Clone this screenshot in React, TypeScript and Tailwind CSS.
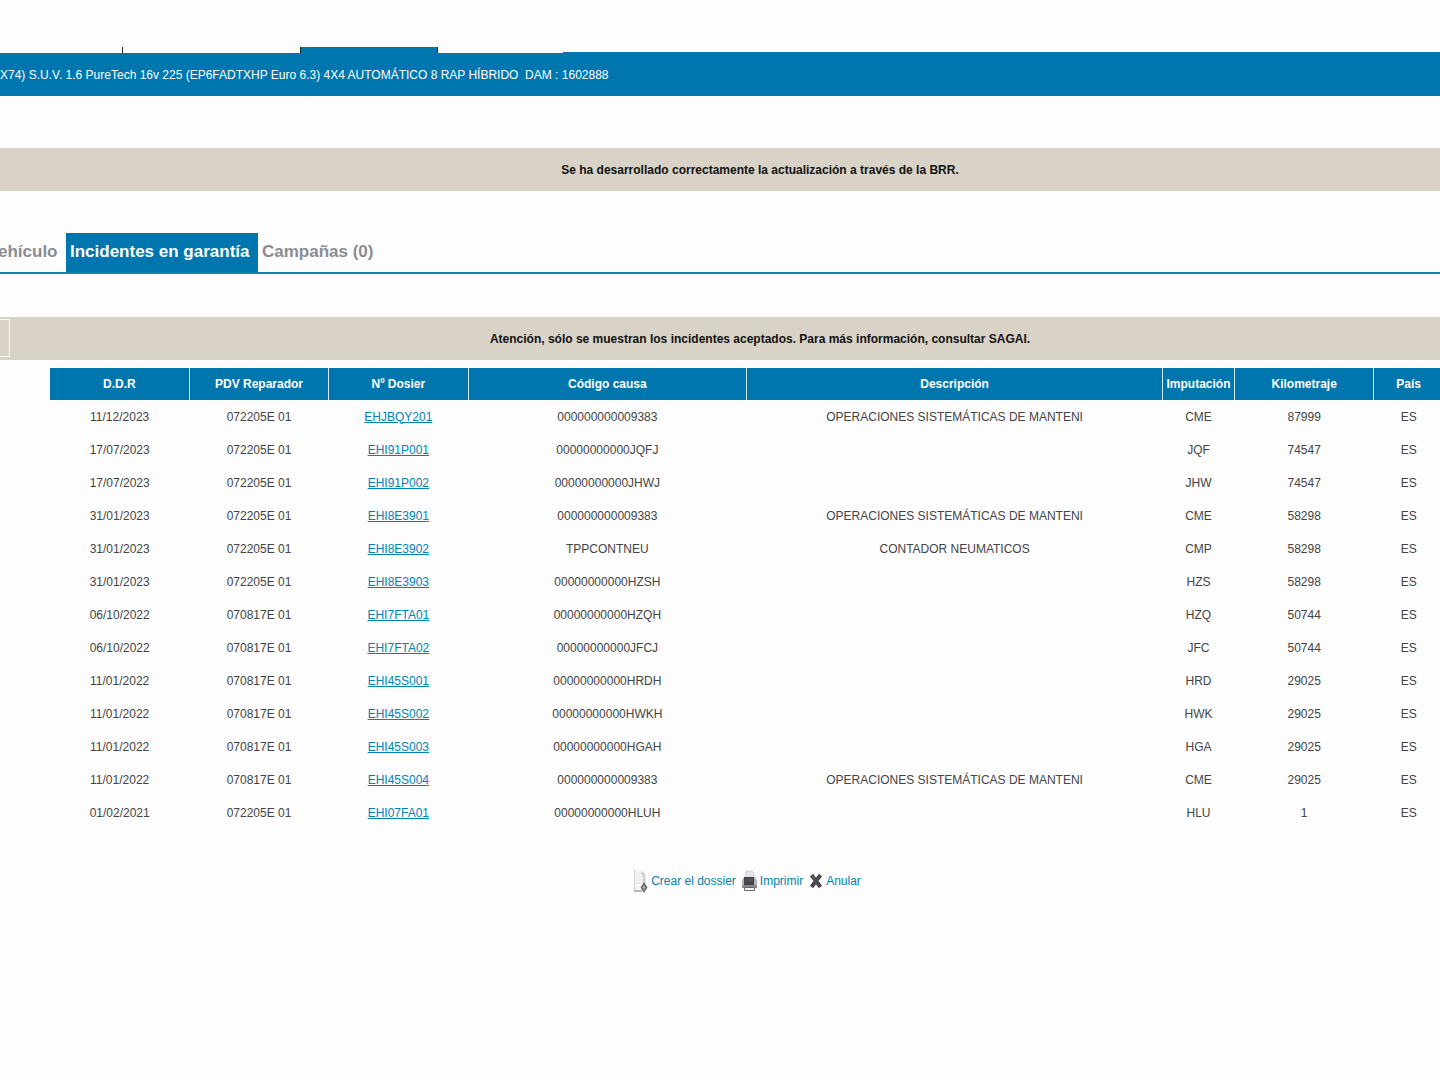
import { clsx } from 'clsx';

interface Incident {
  date: string;
  dealer: string;
  dossier: string;
  cause: string;
  description?: string;
  charge: string;
  km: string;
}

const incidents: Incident[] = [
  { date: '11/12/2023', dealer: '072205E 01', dossier: 'EHJBQY201', cause: '000000000009383', description: 'OPERACIONES SISTEMÁTICAS DE MANTENI', charge: 'CME', km: '87999' },
  { date: '17/07/2023', dealer: '072205E 01', dossier: 'EHI91P001', cause: '00000000000JQFJ', charge: 'JQF', km: '74547' },
  { date: '17/07/2023', dealer: '072205E 01', dossier: 'EHI91P002', cause: '00000000000JHWJ', charge: 'JHW', km: '74547' },
  { date: '31/01/2023', dealer: '072205E 01', dossier: 'EHI8E3901', cause: '000000000009383', description: 'OPERACIONES SISTEMÁTICAS DE MANTENI', charge: 'CME', km: '58298' },
  { date: '31/01/2023', dealer: '072205E 01', dossier: 'EHI8E3902', cause: 'TPPCONTNEU', description: 'CONTADOR NEUMATICOS', charge: 'CMP', km: '58298' },
  { date: '31/01/2023', dealer: '072205E 01', dossier: 'EHI8E3903', cause: '00000000000HZSH', charge: 'HZS', km: '58298' },
  { date: '06/10/2022', dealer: '070817E 01', dossier: 'EHI7FTA01', cause: '00000000000HZQH', charge: 'HZQ', km: '50744' },
  { date: '06/10/2022', dealer: '070817E 01', dossier: 'EHI7FTA02', cause: '00000000000JFCJ', charge: 'JFC', km: '50744' },
  { date: '11/01/2022', dealer: '070817E 01', dossier: 'EHI45S001', cause: '00000000000HRDH', charge: 'HRD', km: '29025' },
  { date: '11/01/2022', dealer: '070817E 01', dossier: 'EHI45S002', cause: '00000000000HWKH', charge: 'HWK', km: '29025' },
  { date: '11/01/2022', dealer: '070817E 01', dossier: 'EHI45S003', cause: '00000000000HGAH', charge: 'HGA', km: '29025' },
  { date: '11/01/2022', dealer: '070817E 01', dossier: 'EHI45S004', cause: '000000000009383', description: 'OPERACIONES SISTEMÁTICAS DE MANTENI', charge: 'CME', km: '29025' },
  { date: '01/02/2021', dealer: '072205E 01', dossier: 'EHI07FA01', cause: '00000000000HLUH', charge: 'HLU', km: '1' },
];

const columns = [
  { label: 'D.D.R', width: 'w-[10%]' },
  { label: 'PDV Reparador', width: 'w-[10%]' },
  { label: 'Nº Dosier', width: 'w-[10%]' },
  { label: 'Código causa', width: 'w-[20%]' },
  { label: 'Descripción', width: '' },
  { label: 'Imputación', width: 'w-[72px]' },
  { label: 'Kilometraje', width: 'w-[10%]' },
  { label: 'País', width: 'w-[5%]' },
];

function DocumentIcon() {
  return (
    <svg width="15" height="24" viewBox="0 0 15 24" aria-hidden="true">
      <path d="M1 1h8l4 5v16H1z" fill="#f6f6f7" />
      <path d="M1.500 1v20" stroke="#cfcfd1" />
      <path d="M3 5h4M3 8h6M3 11h6M3 14h5" stroke="#e2e2e4" />
      <path d="M9 3l2 4v8" fill="none" stroke="#d4d4d6" strokeWidth="3" />
      <path d="M1 22h8" stroke="#77777b" />
      <path d="M11 13l3.500 5.500-3.500 5.500-3.500-5.500z" fill="#6c6c70" />
      <path d="M11 16v5M9.500 18.500h3" stroke="#b4b4b6" />
    </svg>
  );
}

function PrinterIcon() {
  return (
    <svg width="15" height="22" viewBox="0 0 15 22" aria-hidden="true">
      <path d="M4 1h6l2 3v5H3z" fill="#e6e6ea" stroke="#d2d2d6" />
      <path d="M2 7h11l2 3v8H0v-8z" fill="#b4b4ba" />
      <path d="M2 7h10v8H2z" fill="#434347" />
      <path d="M3 9h8M3 11h8" stroke="#5f5f64" />
      <path d="M0 15h15v3H0z" fill="#8a8a90" />
      <path d="M2.500 17.500h10v3h-10z" fill="#f4f4f6" stroke="#66666b" />
    </svg>
  );
}

function CrossIcon() {
  return (
    <svg width="14" height="20" viewBox="0 0 14 20" aria-hidden="true">
      <path d="M2.500 4l9 12M11.500 4l-9 12" stroke="#4a4a4e" strokeWidth="4" />
      <path d="M2.500 4l3 4" stroke="#77777b" />
    </svg>
  );
}

const actions = [
  { label: 'Crear el dossier', Icon: DocumentIcon },
  { label: 'Imprimir', Icon: PrinterIcon },
  { label: 'Anular', Icon: CrossIcon },
];

const tabs = [
  { label: 'ehículo', className: '-ml-1.5 w-[72px] text-[#8c8c90]' },
  { label: 'Incidentes en garantía', className: 'w-48 bg-[#0076ae] text-white' },
  { label: 'Campañas (0)', className: 'text-[#8c8c90]' },
];

function MessageBar({ children }: { children: React.ReactNode }) {
  return (
    <p className="flex h-[43px] items-center justify-center bg-[#d9d3c7] pl-20 font-bold text-[#111]">
      {children}
    </p>
  );
}

export default function App() {
  return (
    <div className="min-h-screen overflow-hidden bg-[#fdfdfe] pt-[47px] font-['Liberation_Sans',Arial,sans-serif] text-xs text-[#444]">
      <header>
        <div className="flex h-1.5 items-end">
          <div className="h-full w-[123px] border-r border-[#222]" />
          <div className="w-[177px]" />
          <div className="h-full w-[138px] border-x border-[#123] bg-[#0076ae]" />
          <div className="w-[125px]" />
          <div className="h-px flex-1 bg-[#0076ae]" />
        </div>
        <h1 className="flex h-[43px] items-center whitespace-pre bg-[#0076ae] text-white">
          {'X74) S.U.V. 1.6 PureTech 16v 225 (EP6FADTXHP Euro 6.3) 4X4 AUTOMÁTICO 8 RAP HÍBRIDO  DAM : 1602888'}
        </h1>
      </header>

      <main>
        <div className="mt-[52px]">
          <MessageBar>Se ha desarrollado correctamente la actualización a través de la BRR.</MessageBar>
        </div>

        <nav className="mt-[42px] flex h-[41px] border-b-2 border-[#0e82b0] text-[17px] font-bold">
          {tabs.map((tab) => (
            <button
              key={tab.label}
              type="button"
              className={clsx('px-1 text-left whitespace-nowrap', tab.className)}
            >
              {tab.label}
            </button>
          ))}
        </nav>

        <div className="relative mt-[43px]">
          <MessageBar>
            Atención, sólo se muestran los incidentes aceptados. Para más información, consultar SAGAI.
          </MessageBar>
          <div className="absolute top-0.5 left-0 h-[38px] w-2.5 border border-l-0 border-[#faf8f4]" />
        </div>

        <div className="mt-2 -mr-1 ml-[50px]">
          <table className="w-full table-fixed border-collapse text-center">
            <thead>
              <tr className="h-8 bg-[#0076ae] text-white">
                {columns.map((column) => (
                  <th
                    key={column.label}
                    scope="col"
                    className={clsx('border-r border-[#d5eaf3] p-0 font-bold whitespace-nowrap', column.width)}
                  >
                    {column.label}
                  </th>
                ))}
              </tr>
            </thead>
            <tbody>
              {incidents.map((row) => (
                <tr key={row.dossier} className="h-[33px]">
                  <td>{row.date}</td>
                  <td>{row.dealer}</td>
                  <td>
                    <a href="#" className="text-[#0083b4] underline">
                      {row.dossier}
                    </a>
                  </td>
                  <td>{row.cause}</td>
                  <td>{row.description}</td>
                  <td>{row.charge}</td>
                  <td>{row.km}</td>
                  <td>ES</td>
                </tr>
              ))}
            </tbody>
          </table>
        </div>

        <div className="mt-10 flex items-center justify-center gap-1.5 pl-[54px] text-[#0083b4]">
          {actions.map(({ label, Icon }) => (
            <a key={label} href="#" className="flex items-center gap-[3px]">
              <Icon />
              {label}
            </a>
          ))}
        </div>
      </main>
    </div>
  );
}
